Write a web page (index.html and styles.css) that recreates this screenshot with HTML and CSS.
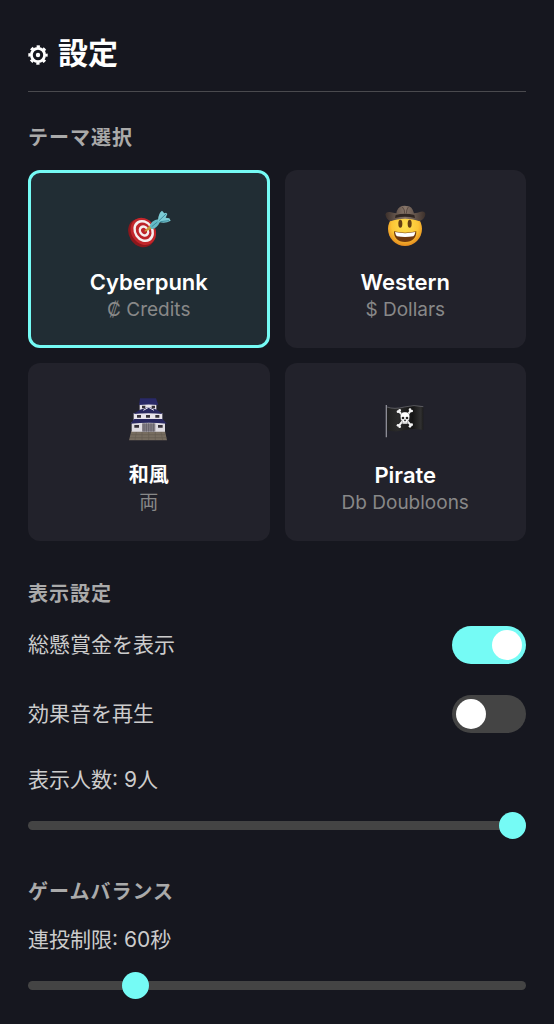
FILE: index.html
```html
<!DOCTYPE html>
<html lang="ja">
<head>
<meta charset="utf-8">
<meta name="viewport" content="width=device-width, initial-scale=1">
<title>設定</title>
<link rel="stylesheet" href="styles.css">
</head>
<body>
<main class="settings">
  <h1 class="title">
    <svg class="gear" viewBox="0 0 20 20" aria-hidden="true">
      <circle cx="10" cy="10" r="6.6" fill="none" stroke="#fff" stroke-width="2.8"/>
      <circle cx="10" cy="10" r="8.5" fill="none" stroke="#fff" stroke-width="2.4" stroke-dasharray="3.3 3.376" stroke-dashoffset="1.65"/>
      <circle cx="10" cy="10" r="2.2" fill="#fff"/>
    </svg>
    <span>設定</span>
  </h1>

  <section class="section">
    <h2 class="heading">テーマ選択</h2>
    <div class="themes">
      <button type="button" class="theme theme-selected" aria-pressed="true">
        <svg class="theme-icon" viewBox="75 42 144 144" aria-hidden="true">
          <ellipse cx="124" cy="129" rx="37" ry="45" transform="rotate(-34 124 129)" fill="#8d171c"/>
          <ellipse cx="130" cy="124" rx="36" ry="43" transform="rotate(-34 130 124)" fill="#c2262b"/>
          <ellipse cx="131" cy="123" rx="29" ry="35" transform="rotate(-34 131 123)" fill="#f5eeee"/>
          <ellipse cx="131" cy="123" rx="22" ry="27" transform="rotate(-34 131 123)" fill="#bd2329"/>
          <ellipse cx="132" cy="123" rx="15" ry="18" transform="rotate(-34 132 123)" fill="#f5eeee"/>
          <ellipse cx="132" cy="123" rx="8" ry="10" transform="rotate(-34 132 123)" fill="#bd2329"/>
          <path d="M133 123l17-17 8 9-23 10z" fill="#c79b3c"/>
          <path d="M149 108q5-17 26-20l5 8q-9 19-25 22z" fill="#65b9c6"/>
          <path d="M174 90q1-20 12-28l7 8 5-2 4 4-5 11 11 2 4 7q-17 10-34 4z" fill="#7bcbd4"/>
          <path d="M177 92l21-20M181 95l26-3M155 110l17-14" stroke="#3e8c9e" stroke-width="3" fill="none"/>
        </svg>
        <span class="theme-name">Cyberpunk</span>
        <span class="theme-unit">₡ Credits</span>
      </button>
      <button type="button" class="theme" aria-pressed="false">
        <svg class="theme-icon" viewBox="63 42 144 144" aria-hidden="true">
          <defs>
            <radialGradient id="face" cx=".5" cy=".4" r=".6"><stop offset="0" stop-color="#ffe04f"/><stop offset=".65" stop-color="#fcc536"/><stop offset="1" stop-color="#e58b1d"/></radialGradient>
            <linearGradient id="hat" x1="0" x2="1"><stop offset="0" stop-color="#3c302b"/><stop offset=".5" stop-color="#88766a"/><stop offset="1" stop-color="#3c302b"/></linearGradient>
          </defs>
          <circle cx="135" cy="117" r="51" fill="url(#face)"/>
          <path d="M76 73q3-9 14-7 9 3 19 4 3-18 17-22 9-2 13 0 17-2 23 22 11-1 20-5 13-3 14 7 0 15-18 22-18-8-43-8t-43 8Q79 89 76 73z" fill="url(#hat)"/>
          <path d="M107 75q28-8 56 0l2 9q-30-7-60 0z" fill="#302622"/>
          <path d="M127 51q8 8 7 20M145 51q-6 8-6 20" stroke="#5a4b43" stroke-width="3" fill="none"/>
          <ellipse cx="121" cy="101" rx="6" ry="12" fill="#633d13"/>
          <ellipse cx="149" cy="101" rx="6" ry="12" fill="#633d13"/>
          <path d="M102 124q33 8 67 0 0 31-34 32-33-1-33-32z" fill="#70390e"/>
          <path d="M105 126q30 7 61 0-2 11-6 13-25 4-49 0-4-2-6-13z" fill="#fff"/>
        </svg>
        <span class="theme-name">Western</span>
        <span class="theme-unit">$ Dollars</span>
      </button>
      <button type="button" class="theme" aria-pressed="false">
        <svg class="theme-icon" viewBox="75 36 144 144" aria-hidden="true">
          <path d="M94 138h101l6 28H87z" fill="#776d60"/>
          <path d="M93 149h104M90 158h109M109 141l-4 24M126 141v24M146 141v24M166 141v24M183 141l5 24" stroke="#655c51" stroke-width="2"/>
          <path d="M95 111h100v29H95z" fill="#dedbe1"/>
          <path d="M101 84h86v24h-86z" fill="#e8e4ec"/>
          <path d="M119 56h50v22h-50z" fill="#e8e4ec"/>
          <path d="M120 40h48l7 20q-29-3-58 0z" fill="#292967"/>
          <path d="M120 74l26-8 25 8 17 13q-43-5-88 0z" fill="#28275e"/>
          <path d="M103 102h84l14 14q-54-6-110 0z" fill="#28275e"/>
          <path d="M130 76l16-9 16 9" stroke="#ece9f0" stroke-width="3" fill="none"/>
          <path d="M126 62h10v8h-10zM155 62h10v8h-10zM111 90h12v8h-12zM138 90h12v8h-12zM166 90h12v8h-12zM103 120h14v8h-14zM174 120h14v8h-14z" fill="#353039"/>
          <path d="M126 115h40v25h-40z" fill="#858087"/>
          <path d="M132 115v25M139 115v25M146 115v25M153 115v25M160 115v25" stroke="#55505a" stroke-width="2"/>
        </svg>
        <span class="theme-name theme-name-kanji">和風</span>
        <span class="theme-unit">両</span>
      </button>
      <button type="button" class="theme" aria-pressed="false">
        <svg class="theme-icon" viewBox="63 36 144 144" aria-hidden="true">
          <defs><linearGradient id="cloth" x1="0" x2="1"><stop offset="0" stop-color="#202020"/><stop offset=".3" stop-color="#2b2b2b"/><stop offset=".7" stop-color="#151515"/><stop offset=".93" stop-color="#303030"/><stop offset="1" stop-color="#1c1c1c"/></linearGradient></defs>
          <path d="M81 66q22 8 52 0 30-8 57-1v70q-27-6-55 0-29 8-54 1z" fill="url(#cloth)"/>
          <path d="M81 66q22 8 52 0 30-8 57-1" stroke="#74747a" stroke-width="2" fill="none"/>
          <path d="M79 60v97" stroke="#8c8c95" stroke-width="4"/>
          <path d="M117 79l36 42M153 76l-36 46" stroke="#f5f5f5" stroke-width="6"/>
          <g fill="#f5f5f5"><circle cx="114" cy="80" r="4"/><circle cx="119" cy="76" r="4"/><circle cx="150" cy="74" r="4"/><circle cx="155" cy="78" r="4"/><circle cx="114" cy="121" r="4"/><circle cx="119" cy="125" r="4"/><circle cx="150" cy="124" r="4"/><circle cx="155" cy="119" r="4"/></g>
          <path d="M121 95q0-14 14-14t14 14q0 10-6 13v9h-16v-9q-6-3-6-13z" fill="#fff" stroke="#242424" stroke-width="1"/>
          <circle cx="129" cy="99" r="4" fill="#242424"/><circle cx="141" cy="99" r="4" fill="#242424"/>
          <path d="M135 103l3 5h-6zM131 112v4M135 112v4M139 112v4" fill="#242424" stroke="#242424"/>
        </svg>
        <span class="theme-name">Pirate</span>
        <span class="theme-unit">Db Doubloons</span>
      </button>
    </div>
  </section>

  <section class="section">
    <h2 class="heading">表示設定</h2>
    <div class="options">
      <div class="row">
        <label class="label" for="total">総懸賞金を表示</label>
        <input class="toggle" type="checkbox" role="switch" id="total" checked>
      </div>
      <div class="row">
        <label class="label" for="sound">効果音を再生</label>
        <input class="toggle" type="checkbox" role="switch" id="sound">
      </div>
      <div class="field">
        <label class="label" for="count">表示人数: 9人</label>
        <input class="slider" type="range" id="count" min="1" max="9" value="9">
      </div>
    </div>
  </section>

  <section class="section">
    <h2 class="heading">ゲームバランス</h2>
    <div class="field">
      <label class="label" for="limit">連投制限: 60秒</label>
      <input class="slider" type="range" id="limit" min="0" max="300" value="60">
    </div>
  </section>
</main>
</body>
</html>
```
FILE: styles.css
```css
:root {
  --bg: #16171f;
  --card: #22222b;
  --accent: #75fbf5;
  --track: #444444;
}

* {
  box-sizing: border-box;
}

body {
  margin: 0;
  background: var(--bg);
  color: #cccccc;
  font-family: Inter, "Noto Sans CJK JP", sans-serif;
}

.settings {
  padding: 28px 28px 25px;
}

.title {
  display: flex;
  align-items: center;
  gap: 10px;
  margin: 0 0 30px;
  padding-bottom: 13px;
  border-bottom: 1px solid #4a4a4e;
  color: #ffffff;
  font-size: 30px;
  font-weight: 700;
  line-height: 50px;
}

.gear {
  width: 20px;
  height: 20px;
  margin-top: 4px;
}

.section + .section {
  margin-top: 37px;
}

.heading {
  margin: 0 0 16px;
  color: #aaaaaa;
  font-size: 20px;
  font-weight: 700;
  line-height: 32px;
  letter-spacing: 1px;
}

.themes {
  display: grid;
  grid-template-columns: 1fr 1fr;
  gap: 15px;
}

.theme {
  display: flex;
  flex-direction: column;
  align-items: center;
  padding: 31px 12px 21px;
  border: 3px solid transparent;
  border-radius: 12px;
  background: var(--card);
  color: #ffffff;
  font-family: inherit;
  cursor: pointer;
}

.theme-selected {
  border-color: var(--accent);
  background: #212d34;
}

.theme-icon {
  width: 48px;
  height: 48px;
  margin-bottom: 16px;
}

.theme-name {
  font-size: 22px;
  font-weight: 600;
  line-height: 28px;
}

.theme-name-kanji {
  font-size: 20px;
}

.theme-unit {
  color: #888888;
  font-size: 19px;
  line-height: 28px;
}

.options {
  display: grid;
  gap: 31px;
}

.row {
  display: flex;
  align-items: center;
  justify-content: space-between;
}

.field {
  display: grid;
  gap: 16px;
}

.label {
  font-size: 21px;
  line-height: 32px;
}

.toggle {
  appearance: none;
  display: flex;
  width: 74px;
  height: 38px;
  margin: 0;
  padding: 4px;
  border-radius: 19px;
  background: var(--track);
  cursor: pointer;
}

.toggle::before {
  content: "";
  width: 30px;
  height: 30px;
  border-radius: 50%;
  background: #ffffff;
}

.toggle:checked {
  justify-content: flex-end;
  background: var(--accent);
}

.slider {
  appearance: none;
  width: 100%;
  height: 27px;
  margin: 0;
  background: transparent;
  cursor: pointer;
}

.slider::-webkit-slider-runnable-track {
  height: 9px;
  border-radius: 5px;
  background: var(--track);
}

.slider::-webkit-slider-thumb {
  appearance: none;
  width: 27px;
  height: 27px;
  margin-top: -9px;
  border-radius: 50%;
  background: var(--accent);
}
```
